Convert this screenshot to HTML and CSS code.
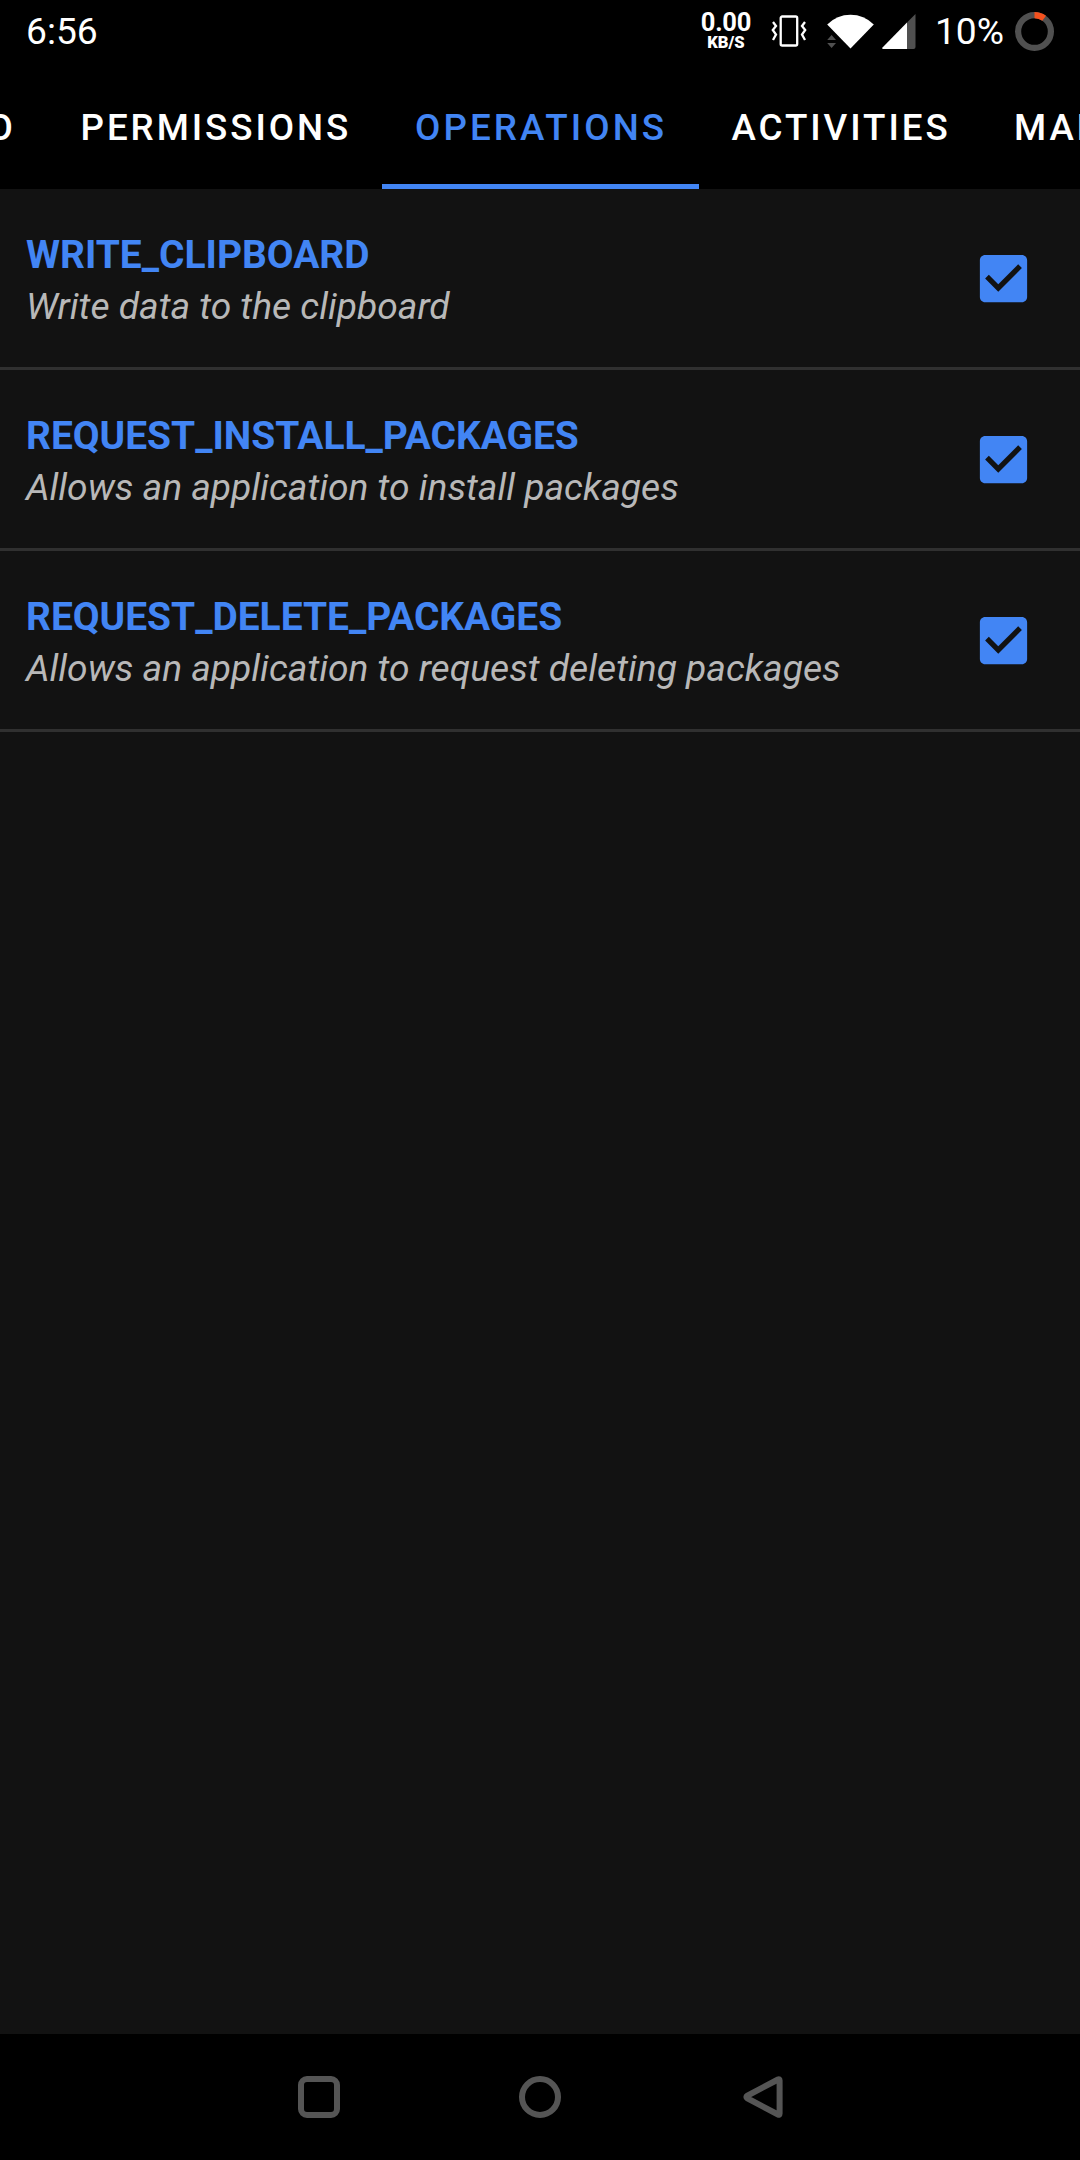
FILE: index.html
```html
<!DOCTYPE html>
<html lang="en">
<head>
<meta charset="utf-8">
<title>App operations</title>
<link rel="stylesheet" href="styles.css">
</head>
<body>
<div class="screen">
  <header class="status">
    <span class="clock">6:56</span>
    <div class="tray">
      <div class="speed"><span class="speed-value">0.00</span><span class="speed-unit">KB/S</span></div>
      <svg class="vibrate" width="36" height="34" viewBox="0 0 36 34" fill="none" stroke="#fff" stroke-width="2.300"><rect x="9.700" y="2.500" width="16.500" height="29" rx="1.500"/><path d="M2 8l3 4-3.200 4 3.200 4.500L2 26M34 8l-3 4 3.200 4-3.200 4.500L34 26"/></svg>
      <svg class="wifi" width="48" height="36" viewBox="0 0 48 36"><path fill="#fff" d="M1.200 10.400Q11 .7 24.500 .7T47.800 10.400L24.500 34.500z"/><path fill="#505050" d="M1.200 26L5.600 21l4.400 5zM1.200 29h8.800l-4.400 5z"/></svg>
      <svg class="signal" width="35" height="36" viewBox="0 0 35 36"><path fill="#505050" d="M34.500 0V33q0 2-2 2H26V8.500z"/><path fill="#fff" d="M26 8.500v26.500H2q-1.500 0-.500-1.400z"/></svg>
      <span class="battery-label">10%</span>
      <svg class="battery" width="40" height="40" viewBox="0 0 40 40" fill="none" stroke-width="6.200"><circle cx="20.500" cy="19.500" r="16.400" stroke="#505050"/><path stroke="#f4511e" d="M20.500 3.100A16.400 16.400 0 0 1 30.140 6.230"/></svg>
    </div>
  </header>
  <nav class="tabs">
    <span class="tab tab-info">INFO</span>
    <span class="tab tab-permissions">PERMISSIONS</span>
    <span class="tab tab-operations active">OPERATIONS</span>
    <span class="tab tab-activities">ACTIVITIES</span>
    <span class="tab tab-manifest">MANIFEST</span>
  </nav>
  <main class="list">
    <div class="row">
      <div class="text"><div class="name">WRITE_CLIPBOARD</div><div class="desc">Write data to the clipboard</div></div>
      <svg class="check" viewBox="0 0 24 24"><path d="M19 3H5c-1.110 0-2 .9-2 2v14c0 1.100.890 2 2 2h14c1.110 0 2-.9 2-2V5c0-1.100-.890-2-2-2zm-9 14l-5-5 1.410-1.410L10 14.170l7.590-7.590L19 8l-9 9z"/></svg>
    </div>
    <div class="row">
      <div class="text"><div class="name">REQUEST_INSTALL_PACKAGES</div><div class="desc">Allows an application to install packages</div></div>
      <svg class="check" viewBox="0 0 24 24"><path d="M19 3H5c-1.110 0-2 .9-2 2v14c0 1.100.890 2 2 2h14c1.110 0 2-.9 2-2V5c0-1.100-.890-2-2-2zm-9 14l-5-5 1.410-1.410L10 14.170l7.590-7.590L19 8l-9 9z"/></svg>
    </div>
    <div class="row">
      <div class="text"><div class="name">REQUEST_DELETE_PACKAGES</div><div class="desc">Allows an application to request deleting packages</div></div>
      <svg class="check" viewBox="0 0 24 24"><path d="M19 3H5c-1.110 0-2 .9-2 2v14c0 1.100.890 2 2 2h14c1.110 0 2-.9 2-2V5c0-1.100-.890-2-2-2zm-9 14l-5-5 1.410-1.410L10 14.170l7.590-7.590L19 8l-9 9z"/></svg>
    </div>
  </main>
  <footer class="navbar">
    <svg width="46" height="46" viewBox="0 0 46 46"><rect x="6" y="5" width="36" height="36" rx="6"/></svg>
    <svg width="46" height="46" viewBox="0 0 46 46"><circle cx="23" cy="23" r="18"/></svg>
    <svg width="46" height="46" viewBox="0 0 46 46"><path d="M39 5.500q1.600-.8 1.600 1V39.500q0 1.800-1.600 1L8.500 24.500q-2.300-1.500 0-3z"/></svg>
  </footer>
</div>
</body>
</html>
```
FILE: styles.css
```css
body {
  margin: 0;
  background: #000;
  font-family: Roboto, "Liberation Sans", sans-serif;
}

.screen {
  display: flex;
  flex-direction: column;
  width: 1080px;
  height: 2160px;
  overflow: hidden;
  background: #121212;
}

.status {
  box-sizing: border-box;
  display: flex;
  flex: none;
  justify-content: space-between;
  height: 63px;
  padding: 0 26px;
  background: #000;
  color: #fff;
  font-size: 37.2px;
  line-height: 63px;
}

.tray {
  display: flex;
  align-items: flex-start;
}

.speed {
  display: flex;
  flex-direction: column;
  align-items: center;
  width: 50px;
  margin-top: 11px;
  font-weight: 700;
}

.speed-value {
  font-size: 25.5px;
  line-height: 22px;
  letter-spacing: -0.2px;
}

.speed-unit {
  font-size: 16.6px;
  font-weight: 900;
  line-height: 19px;
}

.vibrate { margin: 14px 0 0 20px; }
.wifi { margin: 14px 0 0 19px; }
.signal { margin: 14px 0 0 7px; }
.battery-label { margin-left: 19px; }
.battery { margin: 12px 0 0 10px; }

.tabs {
  display: flex;
  flex: none;
  height: 126px;
  margin-left: -102px;
  background: #000;
  color: #fff;
  font-size: 36.75px;
  font-weight: 500;
  letter-spacing: 2.93px;
  line-height: 129px;
}

.tab {
  box-sizing: border-box;
  flex: none;
  padding-left: 32.5px;
  white-space: nowrap;
}

.tab-info {
  width: 150px;
  padding-left: 24px;
}

.tab-permissions { width: 334px; }

.tab-operations {
  width: 317px;
  padding-left: 33px;
  letter-spacing: 3.1px;
}

.tab-activities { width: 283px; }

.tab-manifest {
  width: 250px;
  padding-left: 32px;
}

.active {
  border-bottom: 5px solid #4285f4;
  color: #4285f4;
}

.list { flex: 1; }

.row {
  box-sizing: border-box;
  display: flex;
  align-items: center;
  justify-content: space-between;
  height: 181px;
  padding: 0 45px 0 26px;
  border-bottom: 3px solid #303030;
}

.text {
  display: flex;
  flex-direction: column;
  padding-top: 5px;
}

.name {
  color: #4285f4;
  font-size: 38.9px;
  font-weight: 700;
  line-height: 52px;
}

.desc {
  color: #b8b8b8;
  font-size: 37.2px;
  font-style: italic;
  line-height: 51px;
}

.check {
  width: 63px;
  height: 63px;
  fill: #4285f4;
}

.navbar {
  display: flex;
  flex: none;
  align-items: center;
  justify-content: center;
  gap: 176px;
  height: 126px;
  background: #000;
}

.navbar svg {
  fill: none;
  stroke: #555;
  stroke-width: 6;
}
```
